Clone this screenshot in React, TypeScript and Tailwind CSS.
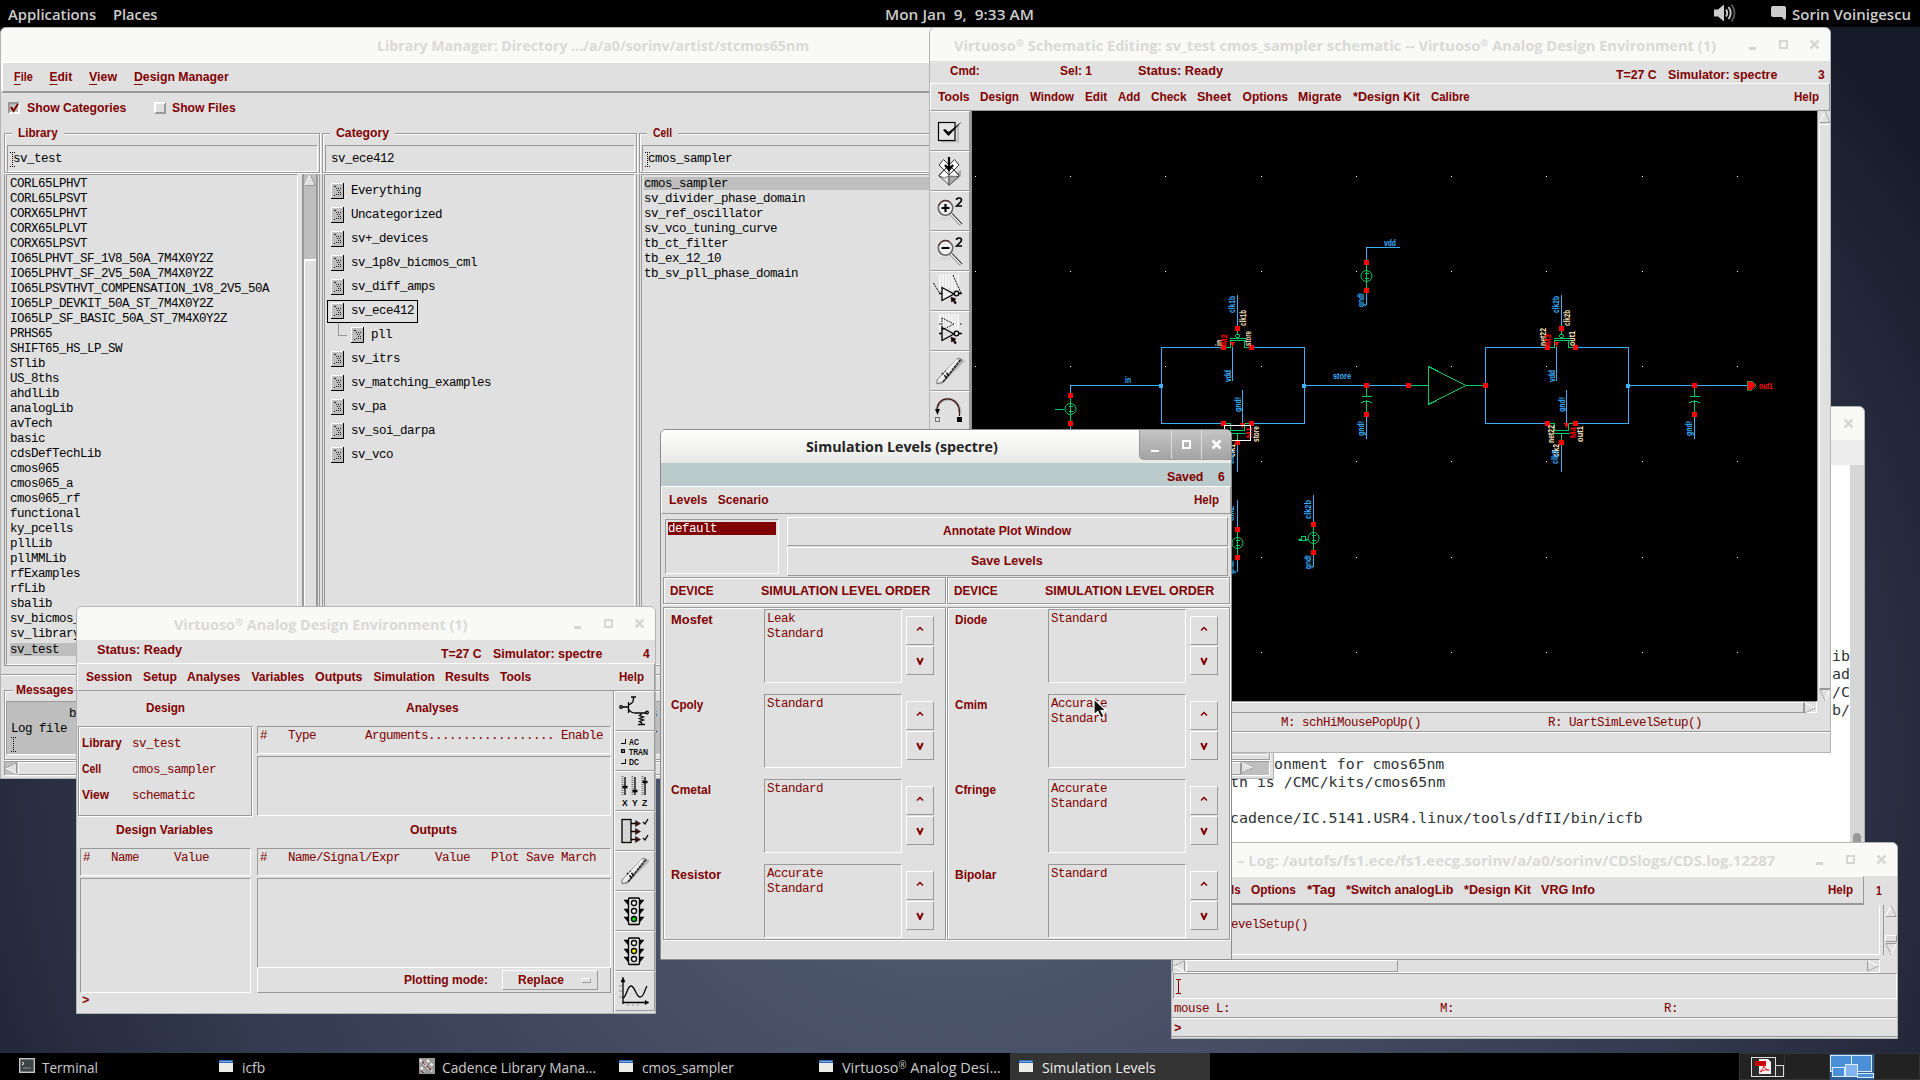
import React, { Fragment, useLayoutEffect, useRef, useState } from "react";
import type { ReactNode } from "react";

const BOLD = "font-['Liberation_Sans',sans-serif] font-bold text-[12px] leading-[15px] text-[#800000]";
const MONO = "font-['Liberation_Mono',monospace] text-[12.5px] leading-[15px] tracking-[-0.5px] whitespace-pre";
const RED = "text-[#800000]";
const SUNK = "border border-t-[#999] border-l-[#999] border-b-white border-r-white";
const RAISED = "border border-t-white border-l-white border-b-[#999] border-r-[#999]";
const FRAME = "border border-[#999] shadow-[inset_1px_1px_0_#fff,1px_1px_0_#fff]";

/* Text squeezed or stretched horizontally to a given width. */
function Fit({ w, className = "", children }: { w: number; className?: string; children: ReactNode }) {
  const ref = useRef<HTMLSpanElement>(null);
  const [k, setK] = useState(1);
  useLayoutEffect(() => {
    if (ref.current) setK(w / ref.current.offsetWidth);
  }, [w]);
  return (
    <span className={"block shrink-0 whitespace-pre " + className} style={{ width: w }}>
      <span ref={ref} className="inline-block origin-left" style={{ transform: `scaleX(${k})` }}>
        {children}
      </span>
    </span>
  );
}

/* Raises and shrinks the registered sign. */
function Marked({ text }: { text: string }) {
  return (
    <>
      {text.split("®").map((part, i) => (
        <Fragment key={i}>
          {i > 0 && <span className="inline-block -translate-y-[4px] text-[10px] leading-[10px]">®</span>}
          {part}
        </Fragment>
      ))}
    </>
  );
}

function Menu({ items }: { items: [string, number][] }) {
  return (
    <div className="flex gap-[10.8px]">
      {items.map(([t, w]) => (
        <Fit key={t} w={w} className={BOLD}>{t}</Fit>
      ))}
    </div>
  );
}

function Controls({ color = "#d6d6d4" }: { color?: string }) {
  return (
    <svg width="72" height="12" viewBox="0 0 72 12" shapeRendering="crispEdges">
      <rect x="0" y="8" width="7" height="2.5" fill={color} />
      <rect x="31" y="2" width="7" height="7" fill="none" stroke={color} strokeWidth="2" />
      <path d="M61.5 1.5l8 8M69.5 1.5l-8 8" stroke={color} strokeWidth="2.6" shapeRendering="auto" />
    </svg>
  );
}

function Win({ cls, title, tw, tcls, controls = true, children }: {
  cls: string; title: string; tw: number; tcls: string; controls?: boolean; children: ReactNode;
}) {
  return (
    <div className={"absolute flex flex-col overflow-hidden rounded-t-[6px] border border-[#b4b4b4] bg-[#e0e0e0] " + cls}>
      <div className="flex h-[33px] shrink-0 items-center bg-[#f9f9f7] pr-[9px]">
        <Fit w={tw} className={"font-['Open_Sans',sans-serif] text-[15px] leading-[20px] font-bold text-[#d9d9d7] " + tcls}><Marked text={title} /></Fit>
        {controls && <div className="ml-auto pt-[1px]"><Controls /></div>}
      </div>
      {children}
    </div>
  );
}

/* ---------- Library manager ---------- */

const LIBS = ["CORL65LPHVT", "CORL65LPSVT", "CORX65LPHVT", "CORX65LPLVT", "CORX65LPSVT", "IO65LPHVT_SF_1V8_50A_7M4X0Y2Z",
  "IO65LPHVT_SF_2V5_50A_7M4X0Y2Z", "IO65LPSVTHVT_COMPENSATION_1V8_2V5_50A", "IO65LP_DEVKIT_50A_ST_7M4X0Y2Z",
  "IO65LP_SF_BASIC_50A_ST_7M4X0Y2Z", "PRHS65", "SHIFT65_HS_LP_SW", "STlib", "US_8ths", "ahdlLib", "analogLib", "avTech",
  "basic", "cdsDefTechLib", "cmos065", "cmos065_a", "cmos065_rf", "functional", "ky_pcells", "pllLib", "pllMMLib",
  "rfExamples", "rfLib", "sbalib", "sv_bicmos_cml", "sv_library", "sv_test"];
const CATS = ["Everything", "Uncategorized", "sv+_devices", "sv_1p8v_bicmos_cml", "sv_diff_amps", "sv_ece412", "pll",
  "sv_itrs", "sv_matching_examples", "sv_pa", "sv_soi_darpa", "sv_vco"];
const CELLS = ["cmos_sampler", "sv_divider_phase_domain", "sv_ref_oscillator", "sv_vco_tuning_curve", "tb_ct_filter",
  "tb_ex_12_10", "tb_sv_pll_phase_domain"];

function IBeam({ color = "#000", dashed = true }: { color?: string; dashed?: boolean }) {
  return (
    <svg width="6" height="15" viewBox="0 0 6 15" shapeRendering="crispEdges" className="shrink-0">
      <path d="M0 .5h5M2.5 0v14M0 14.5h5" stroke={color} fill="none" strokeDasharray={dashed ? "1 1" : undefined} />
    </svg>
  );
}

function Entry({ legend, lw, value, caret }: { legend: string; lw: number; value: string; caret?: boolean }) {
  return (
    <div className={"mt-[10px] h-[40px] shrink-0 pl-[2px] pr-[1px] " + FRAME}>
      <div className="-mt-[8px] ml-[5px] h-[15px] w-fit bg-[#e0e0e0] px-[6px]">
        <Fit w={lw} className={BOLD}>{legend}</Fit>
      </div>
      <div className={"mt-[4px] flex h-[27px] items-center pl-[2px] pt-[1px] " + SUNK}>
        <div className="w-[4px]">{caret && <IBeam />}</div>
        <span className={MONO + " -ml-[1px]"}>{value}</span>
      </div>
    </div>
  );
}

function CatIcon() {
  return (
    <svg width="13" height="16" viewBox="0 0 13 16" shapeRendering="crispEdges" className="shrink-0">
      <rect width="13" height="16" fill="#bebebe" />
      <path d="M.5 16V.5H13" stroke="#fff" fill="none" />
      <path d="M12.5 0v15.5H0" stroke="#000" fill="none" />
      <path d="M3 3.5h2M5 5.5h1M7 5.5h1M9 5.500h1M6 7.5h1M8 7.5h1M7 9.500h1M9 9.500h1M5 11.5h1M7 11.5h1M9 11.500h1M3 12.5h1" stroke="#222" />
    </svg>
  );
}

function Arrow({ dir, dark = false }: { dir: "u" | "d" | "l" | "r"; dark?: boolean }) {
  const rot = { u: "", r: "rotate-90", d: "rotate-180", l: "-rotate-90" }[dir];
  return (
    <svg width="12" height="12" viewBox="0 0 12 12" className={"shrink-0 " + rot}>
      {dark && <rect width="12" height="12" fill="#bebebe" />}
      <path d="M6 .5L.8 11.5H11.2Z" fill="#e0e0e0" />
      <path d="M6 .5L.8 11.5" stroke="#fff" />
      <path d="M6 .5L11.2 11.5" stroke="#888" strokeDasharray="1.5 1" />
      <path d="M.8 11.5H11.2" stroke="#999" />
    </svg>
  );
}

function LibraryManager() {
  return (
    <Win cls="left-0 top-[27px] h-[752px] w-[1274px]" title="Library Manager: Directory .../a/a0/sorinv/artist/stcmos65nm" tw={432} tcls="ml-[376px]" controls={false}>
      <div className="flex h-[32px] shrink-0 gap-[16.5px] border-y-2 border-l-2 border-t-white border-b-[#999] border-l-white pl-[11px] pt-[7px]">
        {([["F", "ile", 19], ["E", "dit", 23], ["V", "iew", 28], ["D", "esign Manager", 95]] as [string, string, number][]).map(([a, b, w]) => (
          <Fit key={b} w={w} className={BOLD}><u className="underline-offset-[3px]">{a}</u>{b}</Fit>
        ))}
      </div>
      <div className="flex h-[30px] shrink-0 items-center pl-[7px]">
        <div className="h-[12px] w-[12px] border-2 border-t-[#999] border-l-[#999] border-b-white border-r-white bg-[#bebebe]">
          <svg width="10" height="10" viewBox="0 0 10 10" className="-mt-[1px]"><path d="M1 4l2.5 4L8 1" stroke="#800000" strokeWidth="2" fill="none" /></svg>
        </div>
        <Fit w={99} className={BOLD + " ml-[7px]"}>Show Categories</Fit>
        <div className="ml-[28px] h-[12px] w-[12px] border-2 border-t-white border-l-white border-b-[#999] border-r-[#999]" />
        <Fit w={64} className={BOLD + " ml-[6px]"}>Show Files</Fit>
      </div>
      <div className="flex h-[543px] shrink-0 gap-[2px] pl-[3px]">
        <div className="flex w-[316px] shrink-0 flex-col border-b border-[#999]">
          <Entry legend="Library" lw={40} value="sv_test" caret />
          <div className="mt-[1px] flex h-[491px] border-x border-[#999] pl-[1px] pr-[1px]">
            <div className={"w-[293px] pl-[3px] pt-[2px] " + SUNK}>
              {LIBS.map((t) => (
                <div key={t} className={MONO + (t === "sv_test" ? " h-[13px] bg-[#bebebe] leading-[13px] mt-[1px]" : " h-[15px]")}>{t}</div>
              ))}
            </div>
            <div className="ml-[4px] flex flex-1 flex-col border-x-2 border-[#999] bg-[#bebebe]">
              <Arrow dir="u" dark />
              <div className="mt-[73px] flex-1 border-l border-t-2 border-white bg-[#e0e0e0]" />
            </div>
          </div>
        </div>
        <div className="flex w-[315px] shrink-0 flex-col border-b border-[#999]">
          <Entry legend="Category" lw={53} value="sv_ece412" />
          <div className="mt-[1px] flex h-[491px] border-x border-[#999] px-[1px]">
            <div className={"flex-1 pl-[2px] pt-[4px] " + SUNK}>
              {CATS.map((t) => (
                <div key={t} className={"flex h-[24px] items-center " + (t === "pll" ? "pl-[3px]" : "")}>
                  {t === "pll" && <div className="ml-[8px] h-[13px] w-[9px] -translate-y-[6px] border-b border-l border-[#999]" />}
                  <div className={"flex h-[23px] items-center gap-[7px] border px-[3px] " + (t === "sv_ece412" ? "border-black" : "border-transparent")}>
                    <CatIcon />
                    <span className={MONO}>{t}</span>
                  </div>
                </div>
              ))}
            </div>
          </div>
        </div>
        <div className="flex flex-1 flex-col border-b border-[#999]">
          <Entry legend="Cell" lw={19} value="cmos_sampler" caret />
          <div className="mt-[1px] flex h-[491px] border-l border-[#999] pl-[1px]">
            <div className={"flex-1 pl-[2px] pt-[2px] " + SUNK}>
              {CELLS.map((t) => (
                <div key={t} className={MONO + " h-[15px]" + (t === "cmos_sampler" ? " bg-[#bebebe] bg-clip-content pb-[2px]" : "")}>{t}</div>
              ))}
            </div>
          </div>
        </div>
      </div>
      <div className="mt-[8px] h-[2px] shrink-0 border-b border-t border-t-[#999] border-b-white" />
      <div className="flex flex-1 flex-col pl-[3px] pr-[3px] pt-[14px]">
        <div className={"flex h-[70px] shrink-0 flex-col pl-[1px] pr-[1px] " + FRAME}>
          <Fit w={57} className={BOLD + " -mt-[8px] ml-[7px] bg-[#e0e0e0] pl-[3px]"}>Messages</Fit>
          <div className={"mt-[3px] flex h-[54px] justify-between bg-[#bebebe] pl-[4px] pt-[5px] " + SUNK}>
            <div className={MONO}>
              <div className="pl-[2px]">{"        by Cadence"}</div>
              <div>{"Log file  is \"/autofs"}</div>
              <IBeam />
            </div>
            <div className={MONO + " w-[617px]"}><div>s</div><div>1</div></div>
          </div>
        </div>
        <div className={"mt-[1px] flex h-[15px] justify-between bg-[#bebebe] " + SUNK}>
          <Arrow dir="l" dark />
          <div className={"ml-[1px] flex-1 bg-[#e0e0e0] " + RAISED} />
          <div className="pr-[16px]"><Arrow dir="r" dark /></div>
        </div>
      </div>
    </Win>
  );
}

/* ---------- Tool bar glyphs, 38 x 38 ---------- */

const Pen = () => (
  <g>
    <path d="M9 32L33 8" stroke="#bbb" strokeWidth="3" />
    <path d="M6 28L27 6l4 2L12 30l-6 2z" fill="#e6e6e6" stroke="#555" strokeWidth=".8" />
    <path d="M12 30L30 7" stroke="#222" strokeWidth="1.5" strokeDasharray="3 .6" />
    <path d="M11 21l5 5M14 19l4 5" stroke="#111" strokeWidth="1.5" />
    <path d="M8 28L26 8" stroke="#fff" strokeWidth="1.4" />
  </g>
);

const Lens = ({ plus }: { plus?: boolean }) => (
  <g>
    <path d="M8 26h12M9 28h10" stroke="#c4c4c4" strokeDasharray="1 1" />
    <circle cx="14.5" cy="16" r="7.2" fill="#efefef" stroke="#666" strokeWidth="1.6" />
    <path d="M7.5 14a7.2 7.2 0 0 1 11-4.500" stroke="#5a1818" fill="none" />
    <path d="M10.500 16h8" stroke="#000" strokeWidth="2.2" />
    {plus && <path d="M14.5 12v8" stroke="#000" strokeWidth="2.2" />}
    <path d="M20 22l10 10.5" stroke="#999" strokeWidth="3.4" />
    <path d="M20 22l10 10" stroke="#fff" strokeWidth="1.6" />
    <path d="M21 21.500l10 10.5" stroke="#111" strokeWidth="1" />
    <path d="M25.500 8q0-2 2.500-2t2.500 2q0 1.500-2.500 3.500L25.500 14h5.500" stroke="#000" strokeWidth="1.6" fill="none" />
  </g>
);

const Inv = ({ double }: { double?: boolean }) => (
  <g fill="none" stroke="#000">
    <path d="M9 2v16M12 2v16M15 2v16M18 2v14M21 2v16M24 2v16M27 2v16" stroke="#fff" strokeWidth="1.4" />
    {double ? <path d="M8 12h3M11 6v12l12-6zM29 12h2" strokeDasharray="1.500 1" /> : <path d="M2.500 11l6 10M22 3l8 18" strokeDasharray="2 1" />}
    <path d="M8 21.500h3M11 15.500v13l12-6.500zM28 21.500h3" strokeWidth="1.300" fill={double ? "none" : "#eee"} />
    <circle cx="25.500" cy="21.500" r="2.300" strokeWidth="1.300" />
    <path d="M20 25l5 2-1.500 1 2 3-1.500 1-2-3-1.500 1z" fill="#200" strokeWidth=".5" />
  </g>
);

const SCH_ICONS: ReactNode[] = [
  <g>
    <path d="M10 29.500h17V12" stroke="#bbb" strokeWidth="2" fill="none" />
    <rect x="7.500" y="10.500" width="16.500" height="18" fill="#e6e6e6" stroke="#000" strokeWidth="1.200" />
    <path d="M12 18l2-1 3.500 3L31 9.500 17.500 24z" fill="#000" />
  </g>,
  <g>
    <path d="M20 33l10-9v-6l-3 2v6z" fill="#aaa" />
    <path d="M12.500 7.500L8 13l5 5-5 5.500 10 9 10-9-5-5.500 5-5-4.500-5.500L18 13z" fill="#fff" stroke="#333" />
    <path d="M8 23.500l5-5.500 5 5 5-5 5 5.500M18 13v10M13 18l5-5 5 5" fill="none" stroke="#333" />
    <path d="M8 24l5.500 2 4.500-2.500v9.500z" fill="#ddd" stroke="#333" strokeWidth=".7" />
    <path d="M18 24v9.500l10-9z" fill="#aaa" stroke="#333" strokeWidth=".7" />
    <path d="M18 5v12M14 13l4 5 4-5" stroke="#000" strokeWidth="2.200" fill="none" />
  </g>,
  <Lens plus />,
  <Lens />,
  <Inv />,
  <Inv double />,
  <Pen />,
  <g>
    <path d="M6 19c0-16 23-16 23 2" stroke="#bbb" strokeWidth="3" fill="none" />
    <path d="M6 20C5 2 28 3 28.500 20v4" stroke="#411" strokeWidth="1.300" fill="none" />
    <path d="M4 17h5l-2.500 6z" fill="#000" />
    <rect x="4.500" y="25.500" width="4" height="4" fill="none" stroke="#000" strokeDasharray="1 1" />
    <rect x="26" y="25" width="5" height="5" fill="#000" />
  </g>,
];

const Light = ({ g, y }: { g?: boolean; y?: boolean }) => (
  <g stroke="#000" strokeWidth="1.300">
    <path d="M8 8l5 0v6zM8 17h5v6zM8 25h5v6zM28 8h-5v6zM28 17h-5v6zM28 25h-5v6z" fill="#000" strokeWidth=".5" />
    <rect x="12.500" y="6" width="11" height="26.500" rx="1" fill="#ddd" />
    <circle cx="18" cy="11" r="2.500" fill="#fff" />
    <circle cx="18" cy="19" r="2.500" fill={y ? "#ff0" : "#fff"} />
    <circle cx="18" cy="27" r="2.500" fill={g ? "#0e0" : "#fff"} />
  </g>
);

const SMALL = "font-['Liberation_Sans',sans-serif] text-[8.5px] font-bold";
const ADE_ICONS: ReactNode[] = [
  <g fill="none" stroke="#000" strokeWidth="1.300">
    <circle cx="5" cy="15" r="1.300" /><path d="M6 15h6M12.500 10v11M12.500 13c5-2 5-4 5-8M15 5h5M12.500 17q2 4 7 4h11M25.500 22l-2 1.500 4 1.500-4 1.500 4 1.500-4 1.500 2 1v2M22 32.500h7" />
    <circle cx="31" cy="20.500" r="1.300" />
  </g>,
  <g stroke="#000" fill="none">
    <path d="M9.500 7v4.500H5M9.500 27v4.500H5" /><rect x="5.500" y="17.500" width="3" height="3" fill="#777" />
    <g fill="#000" stroke="none" className={SMALL}>
      <text x="13" y="12.500" textLength="10" lengthAdjust="spacingAndGlyphs">AC</text>
      <text x="13" y="22.500" textLength="19" lengthAdjust="spacingAndGlyphs">TRAN</text>
      <text x="13" y="32.500" textLength="10" lengthAdjust="spacingAndGlyphs">DC</text>
    </g>
  </g>,
  <g stroke="#000" fill="none">
    <path d="M6.500 4v20M16.500 4v20M26.500 4v20" strokeDasharray="1 1" strokeWidth="2" stroke="#777" />
    <path d="M9 5v18M19 5v18M29 5v18" strokeWidth="1.300" />
    <path d="M6.500 15h5M16.500 19h5M26.500 10h5" strokeWidth="2.600" />
    <g fill="#000" stroke="none" className={SMALL}><text x="6" y="34">X</text><text x="16" y="34">Y</text><text x="26" y="34">Z</text></g>
  </g>,
  <g stroke="#000" fill="none" strokeWidth="1.300">
    <rect x="6" y="7.500" width="9" height="23" fill="#d4d4d4" />
    <path d="M15 11.500h5M15 19.500h5M15 27.500h5" />
    <path d="M19.500 8.500l5 3-5 3zM19.500 16.500l5 3-5 3zM19.500 24.500l5 3-5 3z" fill="#411" strokeWidth=".5" />
    <path d="M27 10l2 2 3-5M27 26l2 2 3-5" />
  </g>,
  <Pen />,
  <Light g />,
  <Light y />,
  <g stroke="#000" fill="none" strokeWidth="1.300">
    <path d="M7 32V8M7 30.500h24" /><path d="M5 10l2-5 2 5zM29 28.500l4 2-4 2z" fill="#000" strokeWidth=".5" />
    <path d="M7 26c4-2 4-12 8-12s5 11 9 11 4-6 7-11" />
    <path d="M12 31v3M17 31v3M22 31v3M3 25h3M3 19h3M3 14h3" stroke="#aaa" />
  </g>,
];

function ToolButtons({ icons, cls }: { icons: ReactNode[]; cls: string }) {
  return (
    <>
      {icons.map((ic, i) => (
        <div key={i} className={"h-[40px] shrink-0 overflow-hidden border border-t-white border-l-transparent border-b-[#999] border-r-[#999] " + cls}>
          <svg width="38" height="38" viewBox="0 0 38 38">{ic}</svg>
        </div>
      ))}
    </>
  );
}

/* ---------- Schematic ---------- */

const B = "#3ab0ff";
const G = "#00c864";
const C = "#ffe4c0";

function Pad({ x, y }: { x: number; y: number }) {
  return <rect x={x - 2.5} y={y - 2.5} width="5" height="5" fill="#f00" stroke="none" />;
}

function VText({ x, y, len, fill = B, children }: { x: number; y: number; len: number; fill?: string; children: string }) {
  return (
    <text transform={`translate(${x} ${y}) rotate(-90)`} fill={fill} textLength={len} lengthAdjust="spacingAndGlyphs">{children}</text>
  );
}

function Source({ x, y }: { x: number; y: number }) {
  return (
    <g>
      <path d={`M${x} ${y - 14}V${y + 14}M${x - 2} ${y + 2.500}h4M${x - 2} ${y - 2.500}h4`} stroke={G} />
      <circle cx={x} cy={y} r="5.500" fill="none" stroke={G} shapeRendering="auto" />
      <Pad x={x} y={y - 14} />
      <Pad x={x} y={y + 14} />
    </g>
  );
}

function Cap({ x }: { x: number }) {
  return (
    <g fill="none" stroke={G}>
      <path d={`M${x} 386V396.500M${x - 5} 396.500h10M${x - 5} 403q5-4 10 0M${x} 401V414`} />
      <path d={`M${x} 415V439`} stroke={B} />
      <Pad x={x} y={385.5} />
      <Pad x={x} y={414} />
      <g stroke="none"><VText x={x - 2.500} y={436} len={15}>gnd!</VText></g>
    </g>
  );
}

function Gate({ dx, names }: { dx: number; names: string[] }) {
  const [clkb, clk, src, drn, top, bot] = names;
  return (
    <g transform={`translate(${dx} 0)`} fill="none" stroke={G}>
      <g stroke={B}>
        <path d="M1237.500 295V328M1232.500 346V381M1242.500 390V424M1237.500 443V472" />
        <path d="M1223 347.500H1161.500V423.500H1223M1252 347.500H1304V423.500H1252" />
      </g>
      <path d="M1237.500 330V335M1229.500 338.500H1245.500M1229.500 340.500H1245.500M1230.500 341V347.500H1224M1244.500 341V347.500H1251" />
      <circle cx="1237.500" cy="336" r="1.800" />
      <path d="M1224 423.500H1230.500V430.500H1244.500V423.500H1251M1229.500 433.500H1245.500M1237.500 434V442" />
      <path d="M1230 342h5l-2.500 5zM1240 423h5l-2.500 5z" fill="#f00" stroke="none" />
      <Pad x={1237.5} y={328.500} /><Pad x={1223} y={347.500} /><Pad x={1251.5} y={347.500} />
      <Pad x={1237.5} y={442.500} /><Pad x={1223} y={423.500} /><Pad x={1251.5} y={423.500} />
      <g stroke="none">
        <VText x={1234.500} y={313} len={17}>{clkb}</VText>
        <VText x={1245.500} y={326} len={16} fill={C}>{clkb}</VText>
        <VText x={1221.500} y={346} len={src === "in" ? 6 : 18} fill={C}>{src}</VText>
        <VText x={1226.500} y={345} len={11} fill="#f00">{top}</VText>
        <VText x={1250.500} y={346} len={15} fill={C}>{drn}</VText>
        <VText x={1230.500} y={382} len={12}>vdd</VText>
        <VText x={1241} y={412} len={15}>gnd!</VText>
        <VText x={1230} y={443} len={src === "in" ? 6 : 18} fill={C}>{src}</VText>
        <VText x={1252} y={438} len={11} fill="#f00">{bot}</VText>
        <VText x={1259} y={442} len={16} fill={C}>{drn}</VText>
        <VText x={1235} y={457} len={13} fill={C}>{clk}</VText>
        <VText x={1234} y={464} len={14}>{clk}</VText>
      </g>
    </g>
  );
}

function Canvas() {
  const dots: ReactNode[] = [];
  for (const x of [975, 1070, 1165, 1261, 1356, 1451, 1546, 1642, 1737])
    for (const y of [176, 271, 366, 461, 557, 652]) dots.push(<rect key={x + "-" + y} x={x} y={y} width="1" height="1" fill="#fff" />);
  return (
    <svg width="845" height="590" viewBox="972 111 845 590" shapeRendering="crispEdges" className="shrink-0 bg-black font-['Liberation_Sans',sans-serif] text-[9px] font-bold">
      {dots}
      <g fill="none" stroke={B}>
        <path d="M1070.500 395V385.500H1161M1070.500 423V450M1304 385.500H1408M1628 385.500H1748" />
        <path d="M1366.500 262V247.500H1400M1366.500 290V305M1313.500 495V524M1313.500 552V567M1237.500 500V529M1237.500 557V572" />
      </g>
      <Source x={1070.5} y={409} />
      <path d="M1055 409.500h9" stroke={G} />
      <Source x={1366.5} y={276} />
      <Source x={1313.5} y={538} />
      <Source x={1237.5} y={543} />
      <path d="M1298 539.500h3v-3h4v3h3M1299 540.500h8" stroke={G} fill="none" />
      <Gate dx={0} names={["clk1b", "clk1", "in", "store", "M2", "M1"]} />
      <Gate dx={324} names={["clk2b", "clk2", "net22", "out1", "M3", "M4"]} />
      <rect x="1224.500" y="425.500" width="26" height="15" fill="none" stroke="#fff" />
      <Cap x={1366.5} />
      <Cap x={1694.5} />
      <path d="M1409 385.500H1428.500M1428.500 366.500V404.500L1466 385.500ZM1466 385.500H1485" stroke={G} fill="none" />
      <Pad x={1408.5} y={385.500} />
      <Pad x={1485} y={385.500} />
      <rect x="1159" y="384" width="4" height="4" fill={B} />
      <rect x="1302" y="384" width="4" height="4" fill={B} />
      <rect x="1626" y="384" width="4" height="4" fill={B} />
      <path d="M1747 381h5l4 4.500-4 4.500h-5z" fill="#f00" stroke={G} strokeWidth=".6" />
      <g fill={B}>
        <text x="1125" y="383" textLength="6" lengthAdjust="spacingAndGlyphs">in</text>
        <text x="1333" y="378.500" textLength="18" lengthAdjust="spacingAndGlyphs">store</text>
        <text x="1384" y="245.500" textLength="12" lengthAdjust="spacingAndGlyphs">vdd</text>
        <text x="1759" y="389" fill="#f00" textLength="14" lengthAdjust="spacingAndGlyphs">out1</text>
      </g>
      <VText x={1363.500} y={307} len={14}>gnd!</VText>
      <VText x={1311} y={519} len={19}>clk2b</VText>
      <VText x={1311} y={569} len={14}>gnd!</VText>
      <VText x={1234} y={521} len={15}>clk2</VText>
      <VText x={1234} y={574} len={14}>gnd!</VText>
    </svg>
  );
}

function Schematic() {
  return (
    <Win cls="left-[929px] top-[27px] h-[726px] w-[902px]" title="Virtuoso® Schematic Editing: sv_test cmos_sampler schematic -- Virtuoso® Analog Design Environment (1)" tw={762} tcls="ml-[24px]">
      <div className="flex h-[22px] shrink-0 pl-[20px]">
        <Fit w={30} className={BOLD + " pt-[3px]"}>Cmd:</Fit>
        <Fit w={32} className={BOLD + " ml-[80px] pt-[3px]"}>Sel: 1</Fit>
        <Fit w={85} className={BOLD + " ml-[46px] pt-[3px]"}>Status: Ready</Fit>
        <Fit w={41} className={BOLD + " ml-auto pt-[7px]"}>T=27 C</Fit>
        <Fit w={109} className={BOLD + " ml-[11px] pt-[7px]"}>Simulator: spectre</Fit>
        <Fit w={7} className={BOLD + " ml-[41px] mr-[5px] pt-[7px]"}>3</Fit>
      </div>
      <div className={"flex h-[28px] shrink-0 justify-between pl-[7px] pr-[10px] pt-[6px] " + RAISED}>
        <Menu items={[["Tools", 31.5], ["Design", 39], ["Window", 44], ["Edit", 22.500], ["Add", 22], ["Check", 35.500], ["Sheet", 34.500], ["Options", 45], ["Migrate", 44], ["*Design Kit", 67], ["Calibre", 39]]} />
        <Fit w={25} className={BOLD}>Help</Fit>
      </div>
      <div className="flex h-[602px] shrink-0">
        <div className="flex w-[42px] shrink-0 flex-col border-r-2 border-[#999]">
          <ToolButtons icons={SCH_ICONS} cls="w-[40px]" />
        </div>
        <div className="flex flex-col">
          <Canvas />
          <div className={"flex h-[12px] w-[845px] " + SUNK}>
            <div className={"h-[11px] w-[832px] " + RAISED} />
            <Arrow dir="r" />
          </div>
        </div>
        <div className="flex h-[590px] flex-1 flex-col border-l border-[#999] pl-[1px]">
          <Arrow dir="u" />
          <div className={"mt-[1px] flex-1 " + RAISED} />
          <Arrow dir="d" />
        </div>
      </div>
      <div className={MONO + " flex h-[19px] shrink-0 border-b border-[#999] pt-[3px] " + RED}>
        <span className="ml-[351px] w-[267px]">M: schHiMousePopUp()</span>
        <span>R: UartSimLevelSetup()</span>
      </div>
      <div className="h-[1px] bg-white" />
    </Win>
  );
}

/* ---------- Analog design environment ---------- */

function Ade() {
  return (
    <Win cls="left-[76px] top-[606px] h-[408px] w-[580px]" title="Virtuoso® Analog Design Environment (1)" tw={293} tcls="ml-[97px]">
      <div className="flex h-[23px] shrink-0 pl-[20px]">
        <Fit w={85} className={BOLD + " pt-[3px]"}>Status: Ready</Fit>
        <Fit w={41} className={BOLD + " ml-auto pt-[7px]"}>T=27 C</Fit>
        <Fit w={109} className={BOLD + " ml-[11px] pt-[7px]"}>Simulator: spectre</Fit>
        <Fit w={7} className={BOLD + " ml-[41px] mr-[5px] pt-[7px]"}>4</Fit>
      </div>
      <div className={"flex h-[28px] shrink-0 justify-between pl-[8px] pr-[10px] pt-[6px] " + RAISED}>
        <Menu items={[["Session", 46], ["Setup", 33.500], ["Analyses", 53.500], ["Variables", 53], ["Outputs", 47.500], ["Simulation", 61], ["Results", 44], ["Tools", 31]]} />
        <Fit w={25} className={BOLD}>Help</Fit>
      </div>
      <div className="flex flex-1">
        <div className="flex flex-1 flex-col border-r border-[#999] pl-[1px]">
          <div className="flex h-[35px] pt-[10px]">
            <Fit w={39} className={BOLD + " ml-[68px]"}>Design</Fit>
            <Fit w={53} className={BOLD + " ml-[221px]"}>Analyses</Fit>
          </div>
          <div className="flex h-[90px] gap-[5px]">
            <div className={"flex w-[174px] flex-col gap-[11px] pl-[3px] pt-[9px] " + FRAME}>
              {([["Library", 40, "sv_test"], ["Cell", 19, "cmos_sampler"], ["View", 27, "schematic"]] as [string, number, string][]).map(([a, w, b]) => (
                <div key={a} className="flex h-[15px]">
                  <div className="w-[50px]"><Fit w={w} className={BOLD}>{a}</Fit></div>
                  <span className={MONO + " pt-[1px] " + RED}>{b}</span>
                </div>
              ))}
            </div>
            <div className="flex w-[354px] flex-col gap-[2px]">
              <div className={MONO + " flex h-[28px] pl-[2px] pt-[2px] " + RED + " " + SUNK}>
                <span className="w-[28px]">#</span><span className="w-[77px]">Type</span><span className="w-[196px]">Arguments..................</span><span>Enable</span>
              </div>
              <div className={"h-[60px] " + SUNK} />
            </div>
          </div>
          <div className="flex h-[32px] pt-[7px]">
            <Fit w={97} className={BOLD + " ml-[38px]"}>Design Variables</Fit>
            <Fit w={47} className={BOLD + " ml-[197px]"}>Outputs</Fit>
          </div>
          <div className="flex h-[145px] gap-[6px] pl-[2px]">
            <div className="flex w-[171px] flex-col gap-[2px]">
              <div className={MONO + " flex h-[28px] pl-[2px] pt-[2px] " + RED + " " + SUNK}>
                <span className="w-[28px]">#</span><span className="w-[63px]">Name</span><span>Value</span>
              </div>
              <div className={"flex-1 " + SUNK} />
            </div>
            <div className="flex w-[354px] flex-col">
              <div className={MONO + " flex h-[28px] pl-[2px] pt-[2px] " + RED + " " + SUNK}>
                <span className="w-[28px]">#</span><span className="w-[147px]">Name/Signal/Expr</span><span className="w-[56px]">Value</span><span>Plot Save March</span>
              </div>
              <div className={"mt-[2px] h-[90px] " + SUNK} />
              <div className="flex h-[25px] items-center border-b border-l border-r border-b-[#999] border-l-white border-r-[#999] pl-[146px]">
                <Fit w={84} className={BOLD}>Plotting mode:</Fit>
                <div className={"ml-[14px] flex h-[20px] w-[96px] items-center pl-[15px] " + RAISED}>
                  <Fit w={46} className={BOLD}>Replace</Fit>
                  <div className={"ml-[17px] h-[5px] w-[10px] " + RAISED} />
                </div>
              </div>
            </div>
          </div>
          <span className={MONO + " pl-[4px] pt-[1px] font-bold " + RED}>&gt;</span>
        </div>
        <div className="flex w-[41px] flex-col border-l border-white">
          <ToolButtons icons={ADE_ICONS} cls="w-[40px]" />
        </div>
      </div>
    </Win>
  );
}

/* ---------- Simulation levels ---------- */

type Dev = [string, number, string[]];
const DEVS: [Dev[], Dev[]] = [
  [["Mosfet", 42, ["Leak", "Standard"]], ["Cpoly", 32, ["Standard"]], ["Cmetal", 40, ["Standard"]], ["Resistor", 50, ["Accurate", "Standard"]]],
  [["Diode", 32, ["Standard"]], ["Cmim", 32, ["Accurate", "Standard"]], ["Cfringe", 41, ["Accurate", "Standard"]], ["Bipolar", 41, ["Standard"]]],
];

function Mover({ up }: { up?: boolean }) {
  return (
    <div className={"flex h-[29px] w-[28px] items-center justify-center " + RAISED}>
      <svg width="8" height="8" viewBox="0 0 8 8" className={up ? "-mt-[4px]" : ""}>
        <path d={up ? "M1 5.500L4 2.500 7 5.500" : "M1.200 1l2.800 6 2.800-6"} stroke="#800000" strokeWidth={up ? 1.5 : 2} fill="none" />
      </svg>
    </div>
  );
}

function SimLevels() {
  const btn = "flex h-[29px] items-center justify-center pr-[2px] " + RAISED;
  return (
    <div className="absolute left-[660px] top-[429px] flex h-[531px] w-[572px] flex-col overflow-hidden rounded-t-[6px] border border-[#8c8c8c] bg-[#e0e0e0]">
      <div className="flex h-[33px] shrink-0 items-start bg-linear-to-b from-white to-[#e8e8e5]">
        <Fit w={192} className="ml-[145px] pt-[6px] font-['Open_Sans',sans-serif] text-[15px] leading-[20px] font-bold text-[#242424]">Simulation Levels (spectre)</Fit>
        <div className="ml-auto flex h-[30px] w-[92px] rounded-bl-[5px] border-b border-l border-[#999] bg-linear-to-b from-[#c4c4c4] to-[#a4a4a4]">
          <div className="flex flex-1 items-center justify-center border-r border-[#ddd] pr-[2px] pt-[12px]"><div className="h-[2px] w-[8px] bg-white" /></div>
          <div className="flex flex-1 items-center justify-center border-r border-[#ddd]"><div className="h-[9px] w-[9px] border-2 border-white" /></div>
          <div className="flex flex-1 items-center justify-center"><svg width="11" height="11" viewBox="0 0 11 11"><path d="M1.500 1.500l8 8M9.500 1.500l-8 8" stroke="#fff" strokeWidth="2.800" /></svg></div>
        </div>
      </div>
      <div className="flex h-[23px] shrink-0 justify-end gap-[15px] bg-[#bbcbcb] pr-[6px] pt-[7px]">
        <Fit w={36} className={BOLD}>Saved</Fit>
        <Fit w={7} className={BOLD}>6</Fit>
      </div>
      <div className={"flex h-[28px] shrink-0 justify-between pl-[7px] pr-[11px] pt-[6px] " + RAISED}>
        <Menu items={[["Levels", 38], ["Scenario", 51]]} />
        <Fit w={25} className={BOLD}>Help</Fit>
      </div>
      <div className="flex h-[62px] shrink-0 pl-[4px] pt-[3px]">
        <div className={"mt-[2px] h-[55px] w-[114px] p-[2px] " + SUNK}>
          <div className={MONO + " h-[13px] bg-[#800000] leading-[13px] text-white"}>default</div>
        </div>
        <div className="ml-[8px] flex w-[441px] flex-col gap-[1px]">
          <div className={btn}><Fit w={128} className={BOLD}>Annotate Plot Window</Fit></div>
          <div className={btn}><Fit w={72} className={BOLD}>Save Levels</Fit></div>
        </div>
      </div>
      <div className="flex gap-[1px] pl-[2px] pt-[1px]">
        {DEVS.map((col, c) => (
          <div key={c} className="flex w-[283px] flex-col gap-[3px]">
            <div className={"flex h-[27px] pl-[6px] pt-[6px] " + FRAME}>
              <Fit w={44} className={BOLD}>DEVICE</Fit>
              <Fit w={169} className={BOLD + " ml-[47px]"}>SIMULATION LEVEL ORDER</Fit>
            </div>
            <div className={"h-[333px] pl-[7px] pt-[1px] " + FRAME}>
              {col.map(([name, w, levels]) => (
                <div key={name} className="flex h-[85px]">
                  <div className="w-[93px] pt-[4px]"><Fit w={w} className={BOLD}>{name}</Fit></div>
                  <div className={MONO + " h-[74px] w-[138px] pl-[2px] pt-[2px] " + RED + " " + SUNK}>
                    {levels.map((l) => <div key={l}>{l}</div>)}
                  </div>
                  <div className="ml-[4px] flex flex-col gap-[1px] pt-[7px]"><Mover up /><Mover /></div>
                </div>
              ))}
            </div>
          </div>
        ))}
      </div>
    </div>
  );
}

/* ---------- Terminal and log ---------- */

function Terminal() {
  const T = "font-['DejaVu_Sans_Mono',monospace] text-[14.9px] leading-[18px] text-[#2e3436] whitespace-pre";
  return (
    <Win cls="left-[1100px] top-[406px] h-[469px] w-[765px]" title="Terminal" tw={64} tcls="ml-[300px]">
      <div className="h-[25px] shrink-0 bg-[#ededed]" />
      <div className="flex flex-1 bg-white">
        <div className={"flex flex-1 flex-col pt-[182px] " + T}>
          {["ib", "ad", "/C", "b/"].map((t) => <div key={t} className="h-[18px] pl-[731px]">{t}</div>)}
          <div className="h-[36px]" />
          <div className="pl-[173px]">onment for cmos65nm</div>
          <div className="pl-[129px]">th is /CMC/kits/cmos65nm</div>
          <div className="h-[18px]" />
          <div className="pl-[129px]">cadence/IC.5141.USR4.linux/tools/dfII/bin/icfb</div>
        </div>
        <div className="w-[14px] shrink-0 bg-[#d6d6d6] px-[3px] pt-[368px]"><div className="h-[40px] rounded-t-[4px] bg-[#999]" /></div>
      </div>
    </Win>
  );
}

function Log() {
  return (
    <Win cls="left-[1171px] top-[842px] h-[197px] w-[727px]" title="– Log: /autofs/fs1.ece/fs1.eecg.sorinv/a/a0/sorinv/CDSlogs/CDS.log.12287" tw={538} tcls="ml-[65px]">
      <div className="flex h-[29px] shrink-0 pl-[1px]">
        <div className="flex w-[691px] justify-between border-b-2 border-r border-t border-b-[#999] border-r-[#999] border-t-white pl-[58px] pr-[10px] pt-[6px]">
          <Menu items={[["ls", 9.500], ["Options", 44.500], ["*Tag", 28.500], ["*Switch analogLib", 107], ["*Design Kit", 67], ["VRG Info", 53.500]]} />
          <Fit w={25} className={BOLD}>Help</Fit>
        </div>
        <Fit w={6} className={BOLD + " ml-[12px] pt-[8px]"}>1</Fit>
      </div>
      <div className="flex h-[50px] shrink-0 justify-between pl-[1px]">
        <div className={MONO + " w-[707px] border-b border-r border-white pl-[58px] pt-[13px] " + RED}>evelSetup()</div>
        <div className="flex w-[14px] flex-col items-center border-l border-[#999]">
          <Arrow dir="u" />
          <div className={"mt-[18px] h-[7px] w-[12px] " + RAISED} />
          <div className="mt-[1px]"><Arrow dir="d" /></div>
        </div>
      </div>
      <div className={"mt-[4px] flex h-[14px] w-[708px] shrink-0 " + SUNK}>
        <Arrow dir="l" />
        <div className={"ml-[1px] w-[212px] " + RAISED} />
        <div className="ml-auto"><Arrow dir="r" /></div>
      </div>
      <div className={"ml-[1px] flex h-[26px] shrink-0 items-center pl-[2px] " + SUNK}><IBeam color="#800000" dashed={false} /></div>
      <div className={MONO + " flex h-[19px] shrink-0 border-b border-[#999] pl-[2px] pt-[3px] " + RED}>
        <span className="w-[266px]">mouse L:</span><span className="w-[224px]">M:</span><span>R:</span>
      </div>
      <div className={MONO + " h-[19px] shrink-0 border-b border-t border-b-[#999] border-t-white pl-[2px] pt-[3px] font-bold " + RED}>&gt;</div>
    </Win>
  );
}

/* ---------- Panels ---------- */

const PANEL = "font-['Open_Sans',sans-serif] text-[15px] leading-[20px] text-[#ccc]";

function TaskIcon({ kind }: { kind: string }) {
  if (kind === "term")
    return <svg width="16" height="15" viewBox="0 0 16 15"><rect x=".7" y=".7" width="14.600" height="13.600" fill="#3b4443" stroke="#c4c4c4" strokeWidth="1.400" /><path d="M3 4l2 1.500L3 7" stroke="#fff" fill="none" /><path d="M4 10h8" stroke="#667" strokeWidth="2" /></svg>;
  if (kind === "cad")
    return <svg width="16" height="16" viewBox="0 0 16 16"><rect width="16" height="16" fill="#9b9898" /><path d="M1 2l12 11M8 2l6 6M2 9l3 5" stroke="#eee" strokeWidth="2.500" strokeDasharray="3 2" /><path d="M3 3l3 4M8 8l4 4M2 13l3 2" stroke="#733" strokeWidth="1.200" /></svg>;
  return <svg width="14" height="12" viewBox="0 0 14 12"><rect width="14" height="12" fill="#ecece8" /><rect width="14" height="3" fill="#2a66b0" /><path d="M1 1.500h12" stroke="#7fb0ea" /></svg>;
}

const TASKS: [string, string, number][] = [["term", "Terminal", 56], ["win", "icfb", 23], ["cad", "Cadence Library Mana...", 154], ["win", "cmos_sampler", 92], ["win", "Virtuoso® Analog Desi...", 159], ["win", "Simulation Levels", 114]];

export default function App() {
  return (
    <div className="relative h-[1080px] w-[1920px] overflow-hidden bg-[radial-gradient(ellipse_1180px_1080px_at_960px_760px,#535e76,#454e64_35%,#343a4f_65%,#161b2a_100%)]">
      <div className="flex h-[27px] items-center bg-black pl-[8px] pr-[9px]">
        <Fit w={88} className={PANEL + " font-semibold"}>Applications</Fit>
        <Fit w={45} className={PANEL + " ml-[17px] font-semibold"}>Places</Fit>
        <Fit w={149} className={PANEL + " ml-[727px] font-semibold"}>Mon Jan  9,  9:33 AM</Fit>
        <svg width="24" height="20" viewBox="0 0 24 20" className="ml-auto -mt-[2px]" fill="none">
          <path d="M1 6.500h4l6-5v17l-6-5H1z" fill="#ccc" />
          <path d="M13 6.500q2.500 3.500 0 7M15.500 4q4.500 6 0 12" stroke="#ccc" strokeWidth="1.900" />
          <path d="M18.500 1.500q6 8.500 0 17" stroke="#555" strokeWidth="1.900" />
        </svg>
        <svg width="16" height="14" viewBox="0 0 16 14" className="ml-[34px] -mt-[2px]"><path d="M2 0h11q2 0 2 2v9q0 3-2 3-1-2-2-3H2q-2 0-2-2V2q0-2 2-2z" fill="#ccc" /></svg>
        <Fit w={119} className={PANEL + " ml-[5px] font-semibold"}>Sorin Voinigescu</Fit>
      </div>

      <Terminal />
      <LibraryManager />
      <Schematic />
      <Log />
      <Ade />
      <SimLevels />

      <svg width="14" height="22" viewBox="0 0 14 22" className="absolute left-[1093px] top-[698px]">
        <path d="M1 1v16l3.800-3.500L8 20l3-1.500-3-6h5z" fill="#111" stroke="#fff" strokeWidth="1.200" />
      </svg>

      <div className="absolute bottom-0 left-0 flex h-[27px] w-full bg-black pl-[10px]">
        {TASKS.map(([k, t, w], i) => (
          <div key={t} className={"flex w-[200px] shrink-0 items-center pl-[9px] " + (i === 5 ? "bg-[#333]" : "")}>
            <div className="w-[23px] pb-[2px]"><TaskIcon kind={k} /></div>
            <Fit w={w} className={PANEL + (i === 5 ? " text-[#eee]" : "")}><Marked text={t} /></Fit>
          </div>
        ))}
        <svg width="181" height="27" viewBox="0 0 181 27" className="ml-auto">
          <rect width="181" height="27" fill="#333" />
          <path d="M1 1h44v25H1zM46 1h44v25H46zM136 1h44v25h-44z" fill="#222" />
          <rect x="91" y="1" width="44" height="26" fill="#2f5f95" />
          <rect x="12.500" y="4.500" width="24" height="19" fill="#2c2c2c" stroke="#ddd" />
          <rect x="36.500" y="12.500" width="8" height="11" fill="#2c2c2c" stroke="#ddd" />
          <path d="M20 6h9l3 3v12H20z" fill="#f4f4f4" /><rect x="16" y="8" width="11" height="5" fill="#c00" />
          <path d="M21 19q4-4 4-7 0 4 5 5-5-1-9 2" stroke="#d22" fill="none" />
          <g stroke="#dcebfa" fill="#4a90d9">
            <rect x="112.500" y="2.500" width="20" height="16" /><rect x="91.500" y="2.500" width="21" height="16" />
            <rect x="93.500" y="14.500" width="12" height="9" /><rect x="118.500" y="20.500" width="16" height="4" />
            <rect x="106.500" y="11.500" width="12" height="12" fill="#82b5ef" />
          </g>
        </svg>
      </div>
    </div>
  );
}
